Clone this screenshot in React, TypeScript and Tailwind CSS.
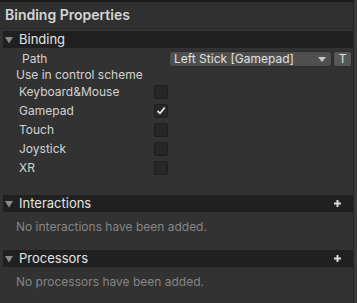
import React from "react";

const font = { fontFamily: "Inter, 'Noto Sans', sans-serif" };

function Tri() {
  return (
    <svg width="8" height="8" viewBox="0 0 8 8" className="shrink-0">
      <path d="M0 1 L8 1 L4 7.5 Z" fill="#8a8a8a" />
    </svg>
  );
}

function Plus() {
  return (
    <svg width="7" height="7" viewBox="0 0 7 7" className="shrink-0">
      <rect x="2.5" y="0" width="2" height="7" fill="#dcdcdc" />
      <rect x="0" y="2.5" width="7" height="2" fill="#dcdcdc" />
    </svg>
  );
}

function Header({ title, plus }: { title: string; plus?: boolean }) {
  return (
    <div className="flex items-center h-[17px] bg-[#202020] pl-[2px] pr-[12px]">
      <Tri />
      <span className="ml-[6px] text-[13px] text-[#e4e4e4] leading-none">{title}</span>
      <div className="flex-1" />
      {plus && <Plus />}
    </div>
  );
}

function Check({ checked }: { checked?: boolean }) {
  return (
    <div className="w-[14px] h-[14px] rounded-[2px] bg-[#272727] border border-[#1e1e1e] flex items-center justify-center">
      {checked && (
        <svg width="10" height="9" viewBox="0 0 10 9">
          <path d="M1.5 5 L4 7.3 L8.8 1.5" stroke="#e6e6e6" strokeWidth="1.8" fill="none" />
        </svg>
      )}
    </div>
  );
}

export default function App() {
  const schemes = [
    { n: "Keyboard&Mouse", c: false },
    { n: "Gamepad", c: true },
    { n: "Touch", c: false },
    { n: "Joystick", c: false },
    { n: "XR", c: false },
  ];
  return (
    <div style={font} className="w-[357px] h-[303px] bg-[#323232] flex overflow-hidden">
      <div className="flex-1 flex flex-col">
        <div className="h-[2px] bg-[#1c1c1c]" />
        <div className="h-[27px] flex items-center pl-[5px] bg-[#303030] border-b border-[#262626]">
          <span className="text-[14px] font-semibold text-[#d6d6d6] leading-none">Binding Properties</span>
        </div>
        <div className="pl-[3px] pt-[2px] flex flex-col">
          <Header title="Binding" />
          <div className="flex items-center h-[16px] mt-[3px] pl-[19px]">
            <span className="text-[12px] text-[#d2d2d2] leading-none w-[147px]">Path</span>
            <div className="w-[163px] h-[16px] bg-[#4f4f4f] border border-[#2c2c2c] rounded-[3px] flex items-center pl-[4px] pr-[5px]">
              <span className="text-[12px] text-[#e0e0e0] leading-none">Left Stick [Gamepad]</span>
              <div className="flex-1" />
              <svg width="8" height="5" viewBox="0 0 8 5">
                <path d="M0 0 L8 0 L4 5 Z" fill="#c8c8c8" />
              </svg>
            </div>
            <div className="ml-[1px] w-[19px] h-[16px] bg-[#575757] border border-[#2c2c2c] rounded-[3px] flex items-center justify-center">
              <span className="text-[12px] text-[#e0e0e0] leading-none">T</span>
            </div>
          </div>
          <div className="h-[16px] flex items-center pl-[13px]">
            <span className="text-[12px] text-[#d2d2d2] leading-none">Use in control scheme</span>
          </div>
          <div className="flex flex-col -mt-[1px]">
            {schemes.map((s) => (
              <div key={s.n} className="h-[19px] flex items-center pl-[16px]">
                <span className="text-[12px] text-[#d2d2d2] leading-none w-[135px]">{s.n}</span>
                <Check checked={s.c} />
              </div>
            ))}
          </div>
          <div className="h-[18px]" />
          <Header title="Interactions" plus />
          <div className="h-[30px] flex items-center pl-[13px]">
            <span className="text-[12px] text-[#858585] leading-none">No interactions have been added.</span>
          </div>
          <div className="h-[8px]" />
          <Header title="Processors" plus />
          <div className="h-[30px] flex items-center pl-[13px]">
            <span className="text-[12px] text-[#858585] leading-none">No processors have been added.</span>
          </div>
        </div>
      </div>
      <div className="w-[1px] bg-[#242424]" />
      <div className="w-[3px] bg-[#3a3a3a]" />
    </div>
  );
}
